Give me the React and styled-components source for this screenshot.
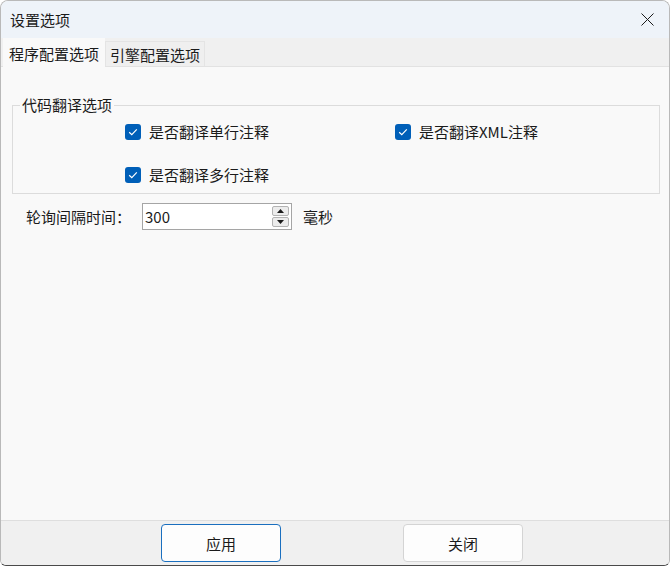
import React, { useState } from 'react';
import styled, { createGlobalStyle } from 'styled-components';

const GlobalStyle = createGlobalStyle`
  html, body {
    margin: 0;
    padding: 0;
    background: #ffffff;
  }
  body {
    font-family: "Noto Sans CJK SC", "Noto Sans", "Liberation Sans", sans-serif;
    font-size: 15px;
    color: #1b1b1b;
  }
`;

const Window = styled.div`
  box-sizing: border-box;
  width: 670px;
  height: 566px;
  display: flex;
  flex-direction: column;
  border: 1px solid #b9b9b9;
  border-bottom-color: #4a4a4a;
  border-radius: 8px 8px 6px 6px;
  overflow: hidden;
  background: #f9f9f9;
`;

const TitleBar = styled.div`
  height: 37px;
  display: flex;
  align-items: center;
  justify-content: space-between;
  padding: 0 15px 0 9px;
  background: #eef3f9;
  line-height: 1;
`;

const Title = styled.span`
  font-size: 15px;
  color: #1b1b1b;
`;

const CloseButton = styled.button`
  border: none;
  background: none;
  padding: 0;
  display: flex;
  cursor: pointer;
`;

const TabStrip = styled.div`
  height: 28px;
  display: flex;
  align-items: flex-end;
  padding-left: 2px;
  background: #f0f0f0;
  border-bottom: 1px solid #e2e2e2;
`;

const Tab = styled.div`
  box-sizing: border-box;
  height: ${({ active }) => (active ? '29px' : '25px')};
  margin-bottom: ${({ active }) => (active ? '-1px' : '0')};
  padding: 0 ${({ active }) => (active ? '5px' : '4px')};
  display: flex;
  align-items: center;
  font-size: 15px;
  background: ${({ active }) => (active ? '#f9f9f9' : '#efefef')};
  border: 1px solid ${({ active }) => (active ? '#f9f9f9' : '#e4e4e4')};
  border-bottom: none;
  color: #1b1b1b;
`;

const Content = styled.div`
  flex: 1;
  display: flex;
  flex-direction: column;
  padding: 28px 9px 0 11px;
`;

const GroupBox = styled.fieldset`
  margin: 0;
  padding: 7px 0 8px 0;
  border: 1px solid #dcdcdc;
  min-width: 0;
`;

const Legend = styled.legend`
  margin-left: 7px;
  padding: 0 2px;
  font-size: 15px;
  line-height: 20px;
`;

const OptionGrid = styled.div`
  display: grid;
  grid-template-columns: 270px auto;
  grid-auto-rows: 20px;
  row-gap: 23px;
  padding-left: 112px;
`;

const Option = styled.label`
  display: flex;
  align-items: center;
  gap: 8px;
  font-size: 15px;
  line-height: 20px;
  cursor: pointer;
`;

const Box = styled.span`
  width: 16px;
  height: 16px;
  border-radius: 3px;
  background: ${({ checked }) => (checked ? '#005fb8' : '#ffffff')};
  border: ${({ checked }) => (checked ? 'none' : '1px solid #8a8a8a')};
  box-sizing: border-box;
  display: flex;
  align-items: center;
  justify-content: center;
  flex-shrink: 0;
`;

const IntervalRow = styled.div`
  display: flex;
  align-items: center;
  margin-top: 9px;
  padding-left: 14px;
`;

const FieldLabel = styled.span`
  width: 116px;
  font-size: 15px;
`;

const SpinBox = styled.div`
  box-sizing: border-box;
  width: 150px;
  height: 27px;
  display: flex;
  align-items: center;
  background: #ffffff;
  border: 1px solid #a5a5a5;
  padding: 0 2px 0 2px;
`;

const SpinInput = styled.input`
  flex: 1;
  min-width: 0;
  border: none;
  outline: none;
  background: transparent;
  font-family: "Noto Sans CJK SC", "Noto Sans", sans-serif;
  font-size: 15px;
  color: #1b1b1b;
  padding: 0;
`;

const Arrows = styled.div`
  display: flex;
  flex-direction: column;
  gap: 1px;
`;

const ArrowButton = styled.button`
  box-sizing: border-box;
  width: 17px;
  height: 10px;
  padding: 0;
  border: 1px solid #b3b3b3;
  border-radius: 2px;
  background: #ececec;
  display: flex;
  align-items: center;
  justify-content: center;
`;

const Unit = styled.span`
  margin-left: 11px;
  font-size: 15px;
`;

const Footer = styled.div`
  height: 44px;
  display: flex;
  align-items: center;
  gap: 122px;
  padding-left: 160px;
  background: #f0f0f0;
  border-top: 1px solid #dedede;
`;

const DialogButton = styled.button`
  box-sizing: border-box;
  width: 120px;
  height: 38px;
  border-radius: 4px;
  background: #fdfdfd;
  border: ${({ primary }) => (primary ? '1.5px solid #1a6fbf' : '1px solid #d4d4d4')};
  font-family: "Noto Sans CJK SC", "Noto Sans", sans-serif;
  font-size: 15px;
  color: #1b1b1b;
  cursor: pointer;
`;

const Check = () => (
  <svg width="10" height="8" viewBox="0 0 10 8">
    <path d="M1.2 4.2 L3.8 6.6 L8.8 1.4" fill="none" stroke="#ffffff" strokeWidth="1.2" />
  </svg>
);

const CheckOption = ({ label, checked, onToggle }) => (
  <Option onClick={onToggle}>
    <Box checked={checked}>{checked && <Check />}</Box>
    {label}
  </Option>
);

const Triangle = ({ up }) => (
  <svg width="7" height="4" viewBox="0 0 7 4">
    <path d={up ? 'M0 4 L3.5 0 L7 4 Z' : 'M0 0 L3.5 4 L7 0 Z'} fill="#1b1b1b" />
  </svg>
);

const App = () => {
  const [opts, setOpts] = useState({ single: true, xml: true, multi: true });
  const [interval, setInterval_] = useState(300);

  const toggle = (key) => setOpts((o) => ({ ...o, [key]: !o[key] }));

  return (
    <>
      <GlobalStyle />
      <Window>
        <TitleBar>
          <Title>设置选项</Title>
          <CloseButton aria-label="关闭">
            <svg width="13" height="13" viewBox="0 0 13 13">
              <path d="M0.5 0.5 L12.5 12.5 M12.5 0.5 L0.5 12.5" stroke="#1b1b1b" strokeWidth="1" />
            </svg>
          </CloseButton>
        </TitleBar>
        <TabStrip>
          <Tab active>程序配置选项</Tab>
          <Tab>引擎配置选项</Tab>
        </TabStrip>
        <Content>
          <GroupBox>
            <Legend>代码翻译选项</Legend>
            <OptionGrid>
              <CheckOption label="是否翻译单行注释" checked={opts.single} onToggle={() => toggle('single')} />
              <CheckOption label="是否翻译XML注释" checked={opts.xml} onToggle={() => toggle('xml')} />
              <CheckOption label="是否翻译多行注释" checked={opts.multi} onToggle={() => toggle('multi')} />
            </OptionGrid>
          </GroupBox>
          <IntervalRow>
            <FieldLabel>轮询间隔时间：</FieldLabel>
            <SpinBox>
              <SpinInput
                value={interval}
                onChange={(e) => setInterval_(e.target.value)}
              />
              <Arrows>
                <ArrowButton onClick={() => setInterval_((v) => Number(v) + 1)}>
                  <Triangle up />
                </ArrowButton>
                <ArrowButton onClick={() => setInterval_((v) => Number(v) - 1)}>
                  <Triangle />
                </ArrowButton>
              </Arrows>
            </SpinBox>
            <Unit>毫秒</Unit>
          </IntervalRow>
        </Content>
        <Footer>
          <DialogButton primary>应用</DialogButton>
          <DialogButton>关闭</DialogButton>
        </Footer>
      </Window>
    </>
  );
};

export default App;
